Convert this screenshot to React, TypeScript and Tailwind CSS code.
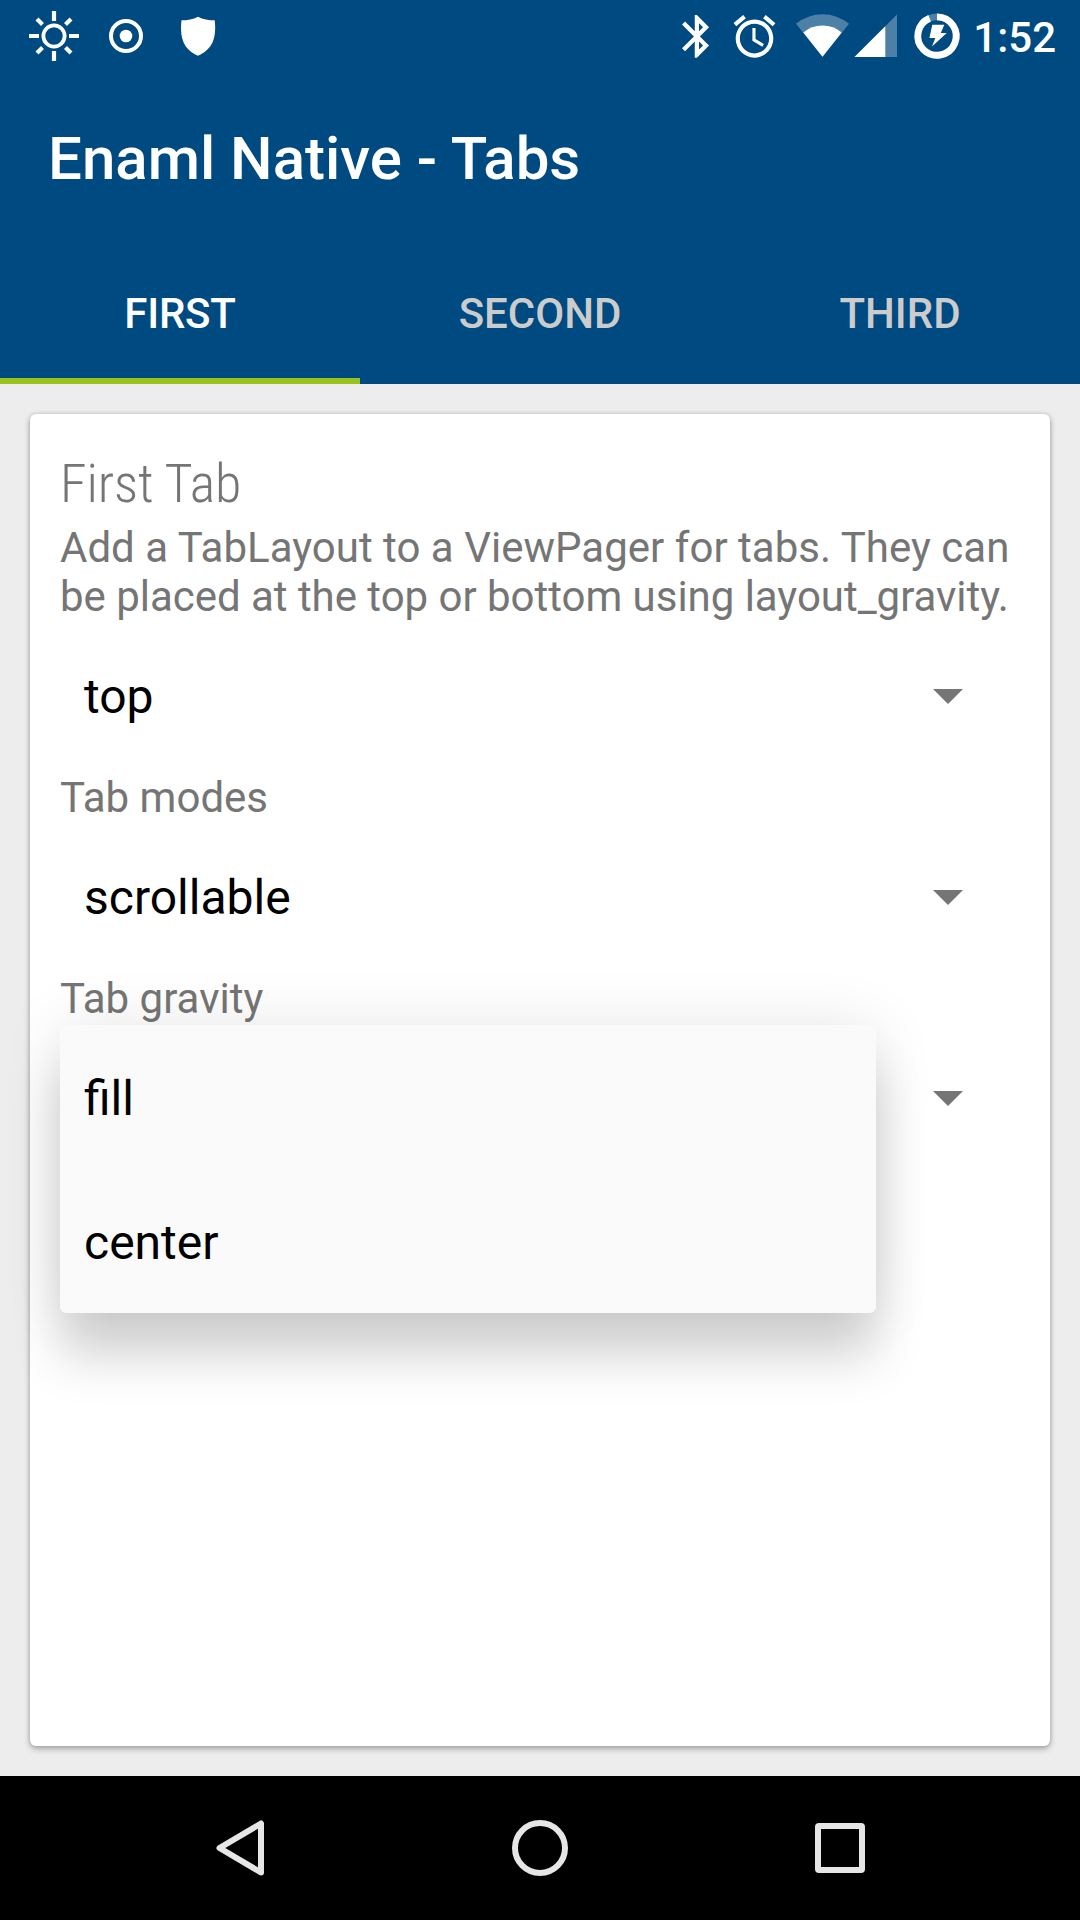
import React from "react";

function StatusBar() {
  return (
    <div className="flex h-[72px] items-start justify-between pl-6 pr-6 text-white">
      <div className="flex">
        <svg className="mr-[18px] h-[72px] w-[60px]" viewBox="24 0 60 72" fill="none" stroke="currentColor">
          <circle cx="54" cy="36" r="10.6" strokeWidth="3.8" />
          <path
            d="M54 11v10M54 51v10M29 36h10M69 36h10M37 19l5.5 5.5M65.5 47.500l5.500 5.500M71 19l-5.500 5.500M42.500 47.500L37 53"
            strokeWidth="4.2"
          />
        </svg>
        <svg className="mr-6 h-[72px] w-[48px]" viewBox="102 0 48 72" fill="none" stroke="currentColor">
          <circle cx="126" cy="36" r="15" strokeWidth="4" />
          <circle cx="126" cy="36" r="6.300" fill="currentColor" stroke="none" />
        </svg>
        <svg className="h-[72px] w-[48px]" viewBox="174 0 48 72" fill="currentColor">
          <path d="M198 16.700C193 19.300 187.500 20.300 181.500 20.300C179.700 37 183 49.500 198 55.700C213 49.500 216.700 37 214.700 20.300C208.500 20.300 203 19.300 198 16.700Z" />
        </svg>
      </div>
      <div className="flex">
        <svg className="h-[72px] w-[52px]" viewBox="672 0 52 72" fill="currentColor">
          <path
            transform="translate(671.4 10.7) scale(2.125 2.14)"
            d="M17.71 7.71L12 2h-1v7.59L6.41 5 5 6.41 10.59 12 5 17.59 6.41 19 11 14.41V22h1l5.710-5.710-4.300-4.290 4.300-4.290zM13 5.830l1.880 1.880L13 9.590V5.830zm1.880 10.460L13 18.170v-3.760l1.880 1.880z"
          />
        </svg>
        <svg className="h-[72px] w-[60px]" viewBox="724 0 60 72" fill="currentColor">
          <path
            transform="translate(729.4 11) scale(2.09 2.12)"
            d="M22 5.720l-4.600-3.860-1.290 1.530 4.600 3.860L22 5.720zM7.880 3.390L6.600 1.860 2 5.710l1.290 1.530 4.590-3.850zM12.500 8H11v6l4.750 2.850.75-1.230-4-2.370V8zM12 4c-4.970 0-9 4.030-9 9s4.020 9 9 9c4.970 0 9-4.030 9-9s-4.030-9-9-9zm0 16c-3.870 0-7-3.130-7-7s3.130-7 7-7 7 3.130 7 7-3.130 7-7 7z"
          />
        </svg>
        <svg className="h-[72px] w-[66px]" viewBox="784 0 66 72" fill="currentColor">
          <path opacity="0.3" d="M796 23.800Q808 14.300 822.500 14.300T849 23.800L822.500 56.800Z" />
          <path d="M803.300 32.500Q811.500 25.600 822.500 25.600T841.700 32.500L822.500 56.800Z" />
        </svg>
        <svg className="h-[72px] w-[54px]" viewBox="850 0 54 72" fill="currentColor">
          <path opacity="0.3" d="M854.500 57L897 14.500V57Z" />
          <path d="M854.500 57L885.300 26.200V57Z" />
        </svg>
        <svg className="h-[72px] w-[69px]" viewBox="904 0 69 72" fill="none">
          <circle cx="937" cy="36" r="19.200" stroke="currentColor" strokeWidth="6.800" opacity="0.3" />
          <path d="M937 16.800A19.200 19.200 0 1 1 929.650 18.260" stroke="currentColor" strokeWidth="6.800" />
          <path d="M932.300 24.800H944.300L940.800 33H946.700L932 46.600L935.300 38H929.400Z" fill="currentColor" />
        </svg>
        <span className="h-[72px] text-[42px] font-medium leading-[75px]">1:52</span>
      </div>
    </div>
  );
}

function Tab({ label, active = false }: { label: string; active?: boolean }) {
  return (
    <div
      className={
        active
          ? "flex flex-1 items-center justify-center border-b-6 border-[#99c21f] pt-[9px] tracking-[-0.2px] text-white"
          : "flex flex-1 items-center justify-center border-b-6 border-transparent pt-[9px] text-[#cccccc]"
      }
    >
      {label}
    </div>
  );
}

function Spinner({ value }: { value?: string }) {
  return (
    <div className="flex h-[152px] items-center justify-between pl-6 pr-[57px] text-[48px] leading-[56px] text-black">
      <span>{value}</span>
      <svg className="mb-[2px] h-[15px] w-[30px]" viewBox="0 0 30 15">
        <path d="M0 0h30L15 15z" fill="#757575" />
      </svg>
    </div>
  );
}

function Menu() {
  return (
    <div className="absolute left-0 top-[2px] h-[288px] w-[816px] rounded-[6px] bg-[#fafafa] text-[48px] leading-[56px] text-black shadow-[0_45px_50px_rgba(0,0,0,0.16),0_0_60px_rgba(0,0,0,0.1)]">
      <div className="flex h-[144px] items-center pl-6 pt-[3px]">fill</div>
      <div className="flex h-[144px] items-center pl-6 pt-[3px]">center</div>
    </div>
  );
}

export default function App() {
  return (
    <div className="flex h-[1920px] w-[1080px] flex-col overflow-hidden bg-[#ededed] font-['Roboto',sans-serif]">
      <header className="flex h-[384px] flex-col bg-[#004a82]">
        <StatusBar />
        <div className="flex h-[168px] items-center pl-12 pt-[5px] text-[60px] font-medium leading-[70px] text-white">
          Enaml Native - Tabs
        </div>
        <div className="flex h-[144px] text-[42px] font-medium leading-[49px]">
          <Tab label="FIRST" active />
          <Tab label="SECOND" />
          <Tab label="THIRD" />
        </div>
      </header>

      <main className="flex h-[1392px] p-[30px]">
        <section className="flex-1 rounded-[6px] bg-white px-[30px] pt-[38px] text-[42px] leading-[49px] text-[#757575] shadow-[0_3px_6px_rgba(0,0,0,0.28),0_0_4px_rgba(0,0,0,0.16)]">
          <h1 className="h-[71px] text-[54px] font-light leading-[64px] tracking-[-0.1px] [font-family:'Roboto_Condensed','Roboto',sans-serif] [font-stretch:75%]">
            First Tab
          </h1>
          <p className="whitespace-nowrap tracking-[0.02px]">Add a TabLayout to a ViewPager for tabs. They can</p>
          <p className="whitespace-nowrap tracking-[-0.03px]">be placed at the top or bottom using layout_gravity.</p>
          <Spinner value="top" />
          <p>Tab modes</p>
          <Spinner value="scrollable" />
          <p>Tab gravity</p>
          <div className="relative">
            <Spinner />
            <Menu />
          </div>
        </section>
      </main>

      <nav className="flex h-[144px] items-center justify-center gap-[204px] bg-black">
        <svg className="h-24 w-24" viewBox="192 1800 96 96" fill="none" stroke="#e6e6e6" strokeWidth="6" strokeLinejoin="round">
          <path d="M261 1823.500V1872.500L219.500 1848Z" />
        </svg>
        <svg className="h-24 w-24" viewBox="492 1800 96 96" fill="none" stroke="#e6e6e6" strokeWidth="6">
          <circle cx="540" cy="1848" r="25" />
        </svg>
        <svg className="h-24 w-24" viewBox="792 1800 96 96" fill="none" stroke="#e6e6e6" strokeWidth="6">
          <rect x="818" y="1826" width="44" height="44" rx="1" strokeLinejoin="round" />
        </svg>
      </nav>
    </div>
  );
}
